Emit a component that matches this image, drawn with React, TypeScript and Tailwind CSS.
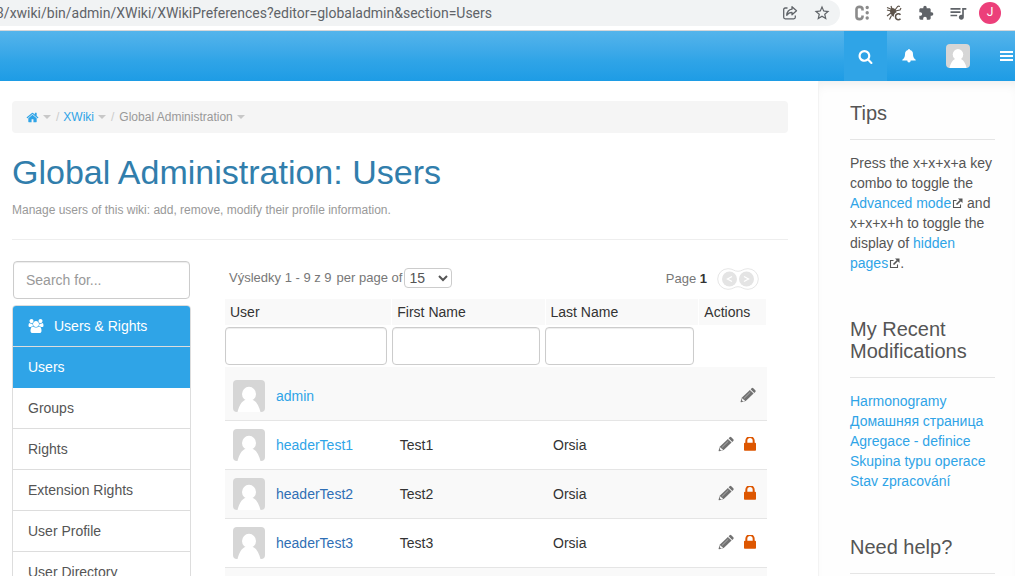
import type { ReactNode } from "react";
import { MdExtension, MdQueueMusic, MdStarBorder } from "react-icons/md";

type User = {
  name: string;
  first?: string;
  last?: string;
  visited?: boolean;
  locked?: boolean;
};

const users: User[] = [
  { name: "admin" },
  { name: "headerTest1", first: "Test1", last: "Orsia", locked: true },
  { name: "headerTest2", first: "Test2", last: "Orsia", visited: true, locked: true },
  { name: "headerTest3", first: "Test3", last: "Orsia", visited: true, locked: true },
];

const sections = ["Users", "Groups", "Rights", "Extension Rights", "User Profile", "User Directory"];

const recent = ["Harmonogramy", "Домашняя страница", "Agregace - definice", "Skupina typu operace", "Stav zpracování"];

function Glyph({ d, className, box = "0 0 1792 1792" }: { d: string; className: string; box?: string }) {
  return (
    <svg viewBox={box} fill="currentColor" aria-hidden="true" className={className}>
      <path d={d} />
    </svg>
  );
}

const HOME =
  "M1472 992v480q0 26-19 45t-45 19h-384v-384h-256v384h-384q-26 0-45-19t-19-45v-480q0-1 .5-3t.5-3l575-474 575 474q1 2 1 6zm223-69l-62 74q-8 9-21 11h-3q-13 0-21-7l-692-577-692 577q-12 8-24 7-13-2-21-11l-62-74q-8-10-7-23.5t11-21.5l719-599q32-26 76-26t76 26l244 204v-195q0-14 9-23t23-9h192q14 0 23 9t9 23v408l219 182q10 8 11 21.5t-7 23.5z";
const SEARCH =
  "M1216 832q0-185-131.5-316.5t-316.5-131.5-316.5 131.5-131.5 316.5 131.5 316.5 316.5 131.5 316.5-131.5 131.5-316.5zm512 832q0 52-38 90t-90 38q-54 0-90-38l-343-342q-179 124-399 124-143 0-273.5-55.5t-225-150-150-225-55.5-273.5 55.5-273.5 150-225 225-150 273.5-55.5 273.5 55.5 225 150 150 225 55.5 273.5q0 220-124 399l343 343q37 37 37 90z";
const LOCK =
  "M640 768h512v-192q0-106-75-181t-181-75-181 75-75 181v192zm832 96v576q0 40-28 68t-68 28h-960q-40 0-68-28t-28-68v-576q0-40 28-68t68-28h32v-192q0-184 132-316t316-132 316 132 132 316v192h32q40 0 68 28t28 68z";
const USERS =
  "M593 896q-162 5-265 128h-134q-82 0-138-40.5t-56-118.5q0-353 124-353 6 0 43.5 21t97.5 42.5 119 21.5q67 0 133-23-5 37-5 66 0 139 81 256zm1071 637q0 120-73 189.5t-194 69.5h-874q-121 0-194-69.5t-73-189.5q0-53 3.5-103.5t14-109 26.5-108.5 43-97.5 62-81 85.5-53.5 111.5-20q10 0 43 21.5t73 48 107 48 135 21.5 135-21.5 107-48 73-48 43-21.5q61 0 111.5 20t85.5 53.5 62 81 43 97.5 26.5 108.5 14 109 3.5 103.5zm-1024-1277q0 106-75 181t-181 75-181-75-75-181 75-181 181-75 181 75 75 181zm704 384q0 159-112.5 271.5t-271.5 112.5-271.5-112.5-112.5-271.5 112.5-271.5 271.5-112.5 271.5 112.5 112.5 271.5zm576 225q0 78-56 118.5t-138 40.5h-134q-103-123-265-128 81-117 81-256 0-29-5-66 66 23 133 23 59 0 119-21.5t97.5-42.5 43.5-21q124 0 124 353zm-128-609q0 106-75 181t-181 75-181-75-75-181 75-181 181-75 181 75 75 181z";

function Avatar({ className }: { className: string }) {
  return (
    <svg viewBox="0 0 32 32" aria-hidden="true" className={className}>
      <rect width="32" height="32" fill="#d6d6d6" />
      <ellipse cx="16" cy="14" rx="7" ry="7.2" fill="#fff" />
      <path d="M4.5 32C6 26 8.500 21.500 12 20h8c3.500 1.500 6 6 7.500 12z" fill="#fff" />
    </svg>
  );
}

function Pencil() {
  return (
    <svg viewBox="0 0 16 16" fill="currentColor" aria-hidden="true" className="size-4 text-[#717171]">
      <path d="M11.600 1.200q.9-.7 1.700 0l2 2q.8.800 0 1.700l-1 1L10.600 2.200z" />
      <path d="M9.900 2.900l3.700 3.700-7.900 7.500-4.500 1.200q-.8.100-.6-.7l1.400-4.200z" />
      <path d="M10.300 5.200l-6.200 6.100" fill="none" stroke="#d8d8d8" strokeWidth=".6" />
      <path d="M2.300 11.500l.9.300.3 1 1 .2.300.9-1.700.5-1.200-1.200z" fill="#fff" />
    </svg>
  );
}

function ExternalIcon() {
  return (
    <svg viewBox="0 0 11 11" fill="none" stroke="#555" aria-hidden="true" className="ml-px inline size-[11px] align-[-1px]">
      <path d="M4.500 2.500h-3v7h7v-3" strokeWidth="1.100" />
      <path d="M4.500 6.500l4-4" strokeWidth="1.700" />
      <path d="M6 .5h4.500V5z" fill="#555" stroke="none" />
    </svg>
  );
}

function BrowserBar() {
  return (
    <div className="flex h-[31px] items-start border-b border-[#d5d7da] bg-white">
      <div className="flex h-[26px] min-w-0 flex-1 items-center overflow-hidden rounded-r-[14px] bg-[#f1f3f4] pr-[9px] text-[#5f6368]">
        <span className="-ml-1 flex-1 truncate pb-px font-['Roboto',sans-serif] text-sm">
          3/xwiki/bin/admin/XWiki/XWikiPreferences?editor=globaladmin&amp;section=Users
        </span>
        <button aria-label="Share" className="mr-[15px]">
          <svg viewBox="0 0 16 16" fill="none" stroke="currentColor" strokeWidth="1.300" strokeLinejoin="round" className="size-4">
            <path d="M5.500 3H3.200Q1.700 3 1.700 4.500v7.800q0 1.500 1.500 1.500h8.600q1.500 0 1.500-1.500V10.500" />
            <path d="M10 1.700l4.500 4-4.500 4V7.400C7.500 7.400 6 8.300 4.700 10.300 5 7 6.800 4.600 10 4.200z" />
          </svg>
        </button>
        <button aria-label="Bookmark">
          <MdStarBorder className="size-[18px]" />
        </button>
      </div>
      <div className="flex h-[25px] items-center gap-4 pr-3.5 pl-3.5 text-[#5f6368]">
        <button aria-label="Cookie extension">
          <svg viewBox="0 0 16 16" fill="none" stroke="#8b8b8b" className="size-4">
            <path d="M8.500 5.500V4.200Q8.500 1.900 5.500 1.900T2.500 4.200v7.600q0 2.300 3 2.300t3-2.300V10.500" strokeWidth="2.600" />
            <path d="M13.200 2.500h.01M13.200 7.800h.01M13.200 13h.01" strokeWidth="3.400" strokeLinecap="round" />
          </svg>
        </button>
        <button aria-label="Bug extension">
          <svg viewBox="0 0 16 16" fill="none" stroke="#5d534a" className="size-4">
            <ellipse cx="7.500" cy="7.500" rx="3" ry="4.500" fill="#5d534a" stroke="none" transform="rotate(-25 7.500 7.500)" />
            <path d="M1 5l4 1M1 2.500l5 2M3.500 14.500l2-4M1 11l4-3M9 5l3-4M12 1l2 .5M9 6l5-1 1-2M6 4L5 1" strokeWidth="1.200" />
            <path d="M14.500 9.700q-1-1.200-2.500-1-2.500.4-2.500 3t2.500 3q1.500.1 2.500-1" stroke="#fff" strokeWidth="3.500" />
            <path d="M14.500 9.700q-1-1.200-2.500-1-2.500.4-2.500 3t2.500 3q1.500.1 2.500-1" strokeWidth="1.500" />
          </svg>
        </button>
        <button aria-label="Extensions">
          <MdExtension className="size-4" />
        </button>
        <button aria-label="Media queue" className="-mx-0.5">
          <MdQueueMusic className="size-5" />
        </button>
        <button className="-ml-[3px] size-[22px] rounded-full bg-[#ec3f7a] font-['Roboto',sans-serif] text-[12px] text-white">J</button>
      </div>
    </div>
  );
}

function TopNav() {
  return (
    <header className="flex h-[50px] justify-end bg-linear-to-b from-[#54b4eb] via-[#2fa4e7] via-60% to-[#1d9ce5] text-white">
      <button aria-label="Search" className="flex w-[43px] items-center justify-center bg-[#2fa4e7]">
        <Glyph d={SEARCH} className="size-[15px]" />
      </button>
      <button aria-label="Notifications" className="flex w-[43px] items-center justify-center">
        <svg viewBox="0 0 14 14" fill="currentColor" className="size-3.5">
          <path d="M7 0q1 0 1 1.100 3 .7 3 4.100 0 3.800 2.700 5.500v.8H8.700Q8.700 13.500 7 13.500T5.300 11.500H.3v-.8Q3 9 3 5.200 3 1.800 6 1.100 6 0 7 0z" />
        </svg>
      </button>
      <button aria-label="Profile" className="flex w-[55px] items-center justify-center">
        <Avatar className="size-6 rounded" />
      </button>
      <button aria-label="Menu" className="flex w-[30px] items-center pl-[15px]">
        <svg viewBox="0 0 13 12" fill="currentColor" className="h-3 w-[13px]">
          <path d="M0 1h13v2H0zM0 5h13v2H0zM0 9h13v2H0z" />
        </svg>
      </button>
    </header>
  );
}

function Caret() {
  return <span className="mr-[5px] ml-1 inline-block border-x-4 border-t-4 border-x-transparent border-t-[#c8c8c8] align-middle" />;
}

function Breadcrumb() {
  return (
    <nav className="flex h-8 items-center rounded bg-[#f5f5f5] px-3.5 text-xs text-[#999]">
      <a href="#home" aria-label="Home" className="text-[#2fa4e7]">
        <Glyph d={HOME} className="size-[13px]" />
      </a>
      <Caret />
      <span className="mr-1 text-[#ccc]">/</span>
      <a href="#xwiki" className="text-[#2fa4e7]">XWiki</a>
      <Caret />
      <span className="mr-[5px] text-[#ccc]">/</span>
      <span>Global Administration</span>
      <Caret />
    </nav>
  );
}

function AdminMenu() {
  return (
    <div className="w-[179px] shrink-0">
      <input
        type="search"
        aria-label="Search for"
        placeholder="Search for..."
        className="mx-px block h-[38px] w-[177px] rounded border border-[#ccc] px-3 shadow-[inset_0_1px_1px_rgba(0,0,0,0.075)] placeholder:text-[#999]"
      />
      <div className="mt-1.5 rounded-t border border-[#ddd]">
        <button className="flex h-10 w-full items-center rounded-t-[3px] bg-[#2fa4e7] pl-[15px] text-left text-white">
          <Glyph d={USERS} box="0 0 1920 1792" className="mr-2.5 h-3.5 w-4" />
          Users &amp; Rights
        </button>
        {sections.map((s) => (
          <a
            key={s}
            href={"#" + s}
            className={
              s === "Users"
                ? "block border-t border-[#ddd] bg-[#2fa4e7] px-[15px] py-2.5 leading-5 text-white"
                : s === "Groups"
                  ? "block border-t border-[#2fa4e7] px-[15px] py-2.5 leading-5"
                  : "block border-t border-[#ddd] px-[15px] py-2.5 leading-5"
            }
          >
            {s}
          </a>
        ))}
      </div>
    </div>
  );
}

function Pager() {
  return (
    <svg viewBox="0 0 42 22" aria-hidden="true" className="h-[22px] w-[42px]">
      <path
        d="M11 .7c5 0 6 2.600 10 2.600S26 .7 31 .7a10.300 10.300 0 0 1 0 20.600c-5 0-6-2.600-10-2.600s-5 2.600-10 2.600A10.300 10.300 0 0 1 11 .7z"
        fill="#fff"
        stroke="#e6e6e6"
      />
      <circle cx="12.500" cy="11" r="7.500" fill="#e4e4e4" />
      <circle cx="29.500" cy="11" r="7.500" fill="#e4e4e4" />
      <path d="M15 8.500L10.500 11l4.500 2.500M27 8.500l4.500 2.500-4.500 2.500" fill="none" stroke="#fff" strokeWidth="1.300" />
    </svg>
  );
}

function UserTable() {
  return (
    <div className="min-w-0 flex-1 pr-[21px]">
      <div className="flex h-[38px] items-start justify-between px-1 text-[13px] text-[#777]">
        <div className="flex h-[34px] items-center">
          <span className="mr-[5px]">Výsledky 1 - 9 z 9</span>
          <label htmlFor="page-size" className="mr-0.5">per page of</label>
          <select id="page-size" className="h-5 w-12 rounded border border-[#ccc] bg-white text-sm text-[#555]">
            <option>15</option>
          </select>
        </div>
        <div className="flex h-9 items-center pr-1">
          <span className="mr-2.5">
            Page <b className="text-[#333]">1</b>
          </span>
          <Pager />
        </div>
      </div>
      <table className="w-full table-fixed border-collapse text-[#333]">
        <colgroup>
          <col className="w-[30.8%]" />
          <col className="w-[28.3%]" />
          <col className="w-[28.4%]" />
          <col />
        </colgroup>
        <thead>
          <tr className="h-[26px] text-left">
            {["User", "First Name", "Last Name", "Actions"].map((h) => (
              <th key={h} className="border-r border-white bg-[#f9f9f9] px-[5px] font-normal">
                {h}
              </th>
            ))}
          </tr>
          <tr className="h-[42px]">
            {["User", "First Name", "Last Name"].map((h) => (
              <td key={h} className="pr-[5px]">
                <input
                  aria-label={"Filter by " + h}
                  className="block h-[38px] w-full rounded border border-[#ccc] bg-white px-3 shadow-[inset_0_1px_1px_rgba(0,0,0,0.075)]"
                />
              </td>
            ))}
            <td />
          </tr>
        </thead>
        <tbody>
          {users.map((u, i) => (
            <tr
              key={u.name}
              className={
                i === 0
                  ? "h-[53px] border-b border-[#e5e5e5] bg-[#f9f9f9] *:pt-[5px]"
                  : i % 2 === 0
                    ? "h-[49px] border-b border-[#e5e5e5] bg-[#f9f9f9]"
                    : "h-[49px] border-b border-[#e5e5e5] bg-white"
              }
            >
              <td className="pl-2">
                <div className="flex items-center">
                  <Avatar className="mt-px mr-[11px] size-8 rounded-sm" />
                  <a href={"#" + u.name} className={u.visited ? "text-[#2f6fb5]" : "text-[#2fa4e7]"}>
                    {u.name}
                  </a>
                </div>
              </td>
              <td className="pl-2">{u.first}</td>
              <td className="pl-2">{u.last}</td>
              <td className="pr-[11px]">
                <div className="flex items-center justify-end gap-2.5 pb-0.5">
                  <button aria-label={"Edit " + u.name}>
                    <Pencil />
                  </button>
                  {u.locked && (
                    <button aria-label={"Disable " + u.name} className="text-[#dd5600]">
                      <Glyph d={LOCK} box="320 256 1152 1280" className="h-3.5 w-3" />
                    </button>
                  )}
                </div>
              </td>
            </tr>
          ))}
          <tr className="h-[49px] bg-[#f9f9f9]">
            <td colSpan={4} />
          </tr>
        </tbody>
      </table>
    </div>
  );
}

function Panel({ title, children }: { title: string; children?: ReactNode }) {
  return (
    <section className="mb-[45px]">
      <h2 className="mb-[13px] border-b border-[#e5e5e5] pb-[15px] text-xl leading-[22px]">{title}</h2>
      {children}
    </section>
  );
}

export default function App() {
  return (
    <div className="flex h-screen flex-col overflow-hidden bg-white font-['Liberation_Sans',Arial,sans-serif] text-sm text-[#555]">
      <div className="shrink-0">
        <BrowserBar />
        <TopNav />
      </div>
      <div className="flex min-h-0 flex-1">
        <main className="min-w-0 flex-1 pt-5 pr-[30px] pl-3">
          <Breadcrumb />
          <h1 className="mt-[19px] text-[34px] leading-10 text-[#317eac]">Global Administration: Users</h1>
          <p className="mt-2 border-b border-[#eee] pb-[19px] text-xs leading-5 text-[#999]">
            Manage users of this wiki: add, remove, modify their profile information.
          </p>
          <div className="mt-[21px] flex items-start gap-[34px]">
            <AdminMenu />
            <UserTable />
          </div>
        </main>
        <aside className="w-[197px] shrink-0 border-l border-[#f3f3f3] bg-[#fefefe] pt-[21px] pr-5 pl-[31px] leading-5 shadow-[inset_0_8px_12px_-6px_rgba(0,0,0,0.08)]">
          <Panel title="Tips">
            <p>
              Press the x+x+x+a key combo to toggle the{" "}
              <a href="#advanced" className="text-[#2fa4e7]">Advanced mode</a>
              <ExternalIcon /> and x+x+x+h to toggle the display of{" "}
              <a href="#hidden" className="text-[#2fa4e7]">hidden pages</a>
              <ExternalIcon />.
            </p>
          </Panel>
          <Panel title="My Recent Modifications">
            <ul>
              {recent.map((r) => (
                <li key={r} className="whitespace-nowrap">
                  <a href={"#" + r} className="text-[#2fa4e7]">{r}</a>
                </li>
              ))}
            </ul>
          </Panel>
          <Panel title="Need help?" />
        </aside>
      </div>
    </div>
  );
}
